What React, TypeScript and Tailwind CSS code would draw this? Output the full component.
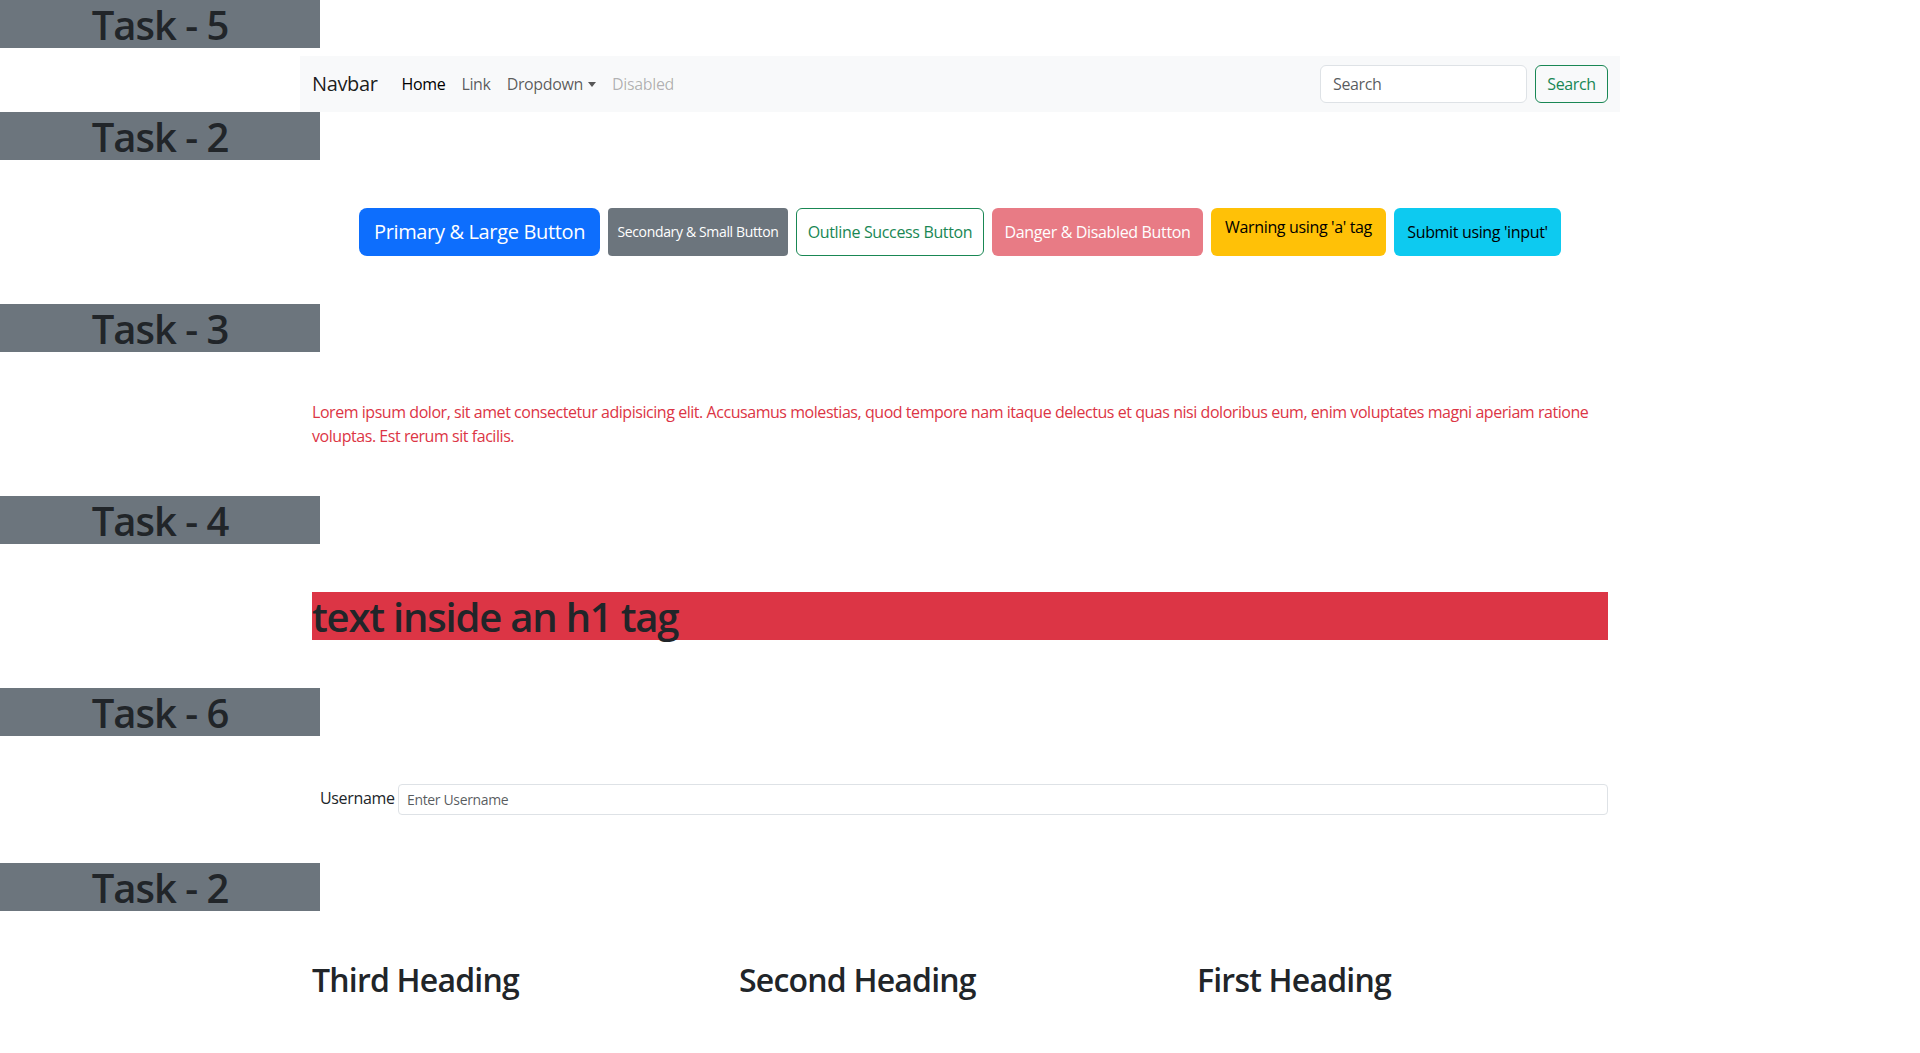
import React from 'react';

const TaskTitle: React.FC<{ title: string }> = ({ title }) => (
    <h1 className="w-[320px] h-12 bg-[#6c757d] text-center text-[40px] leading-[50px] font-semibold tracking-[-1px] text-[#212529]">
        {title}
    </h1>
);

const Navbar: React.FC = () => (
    <nav className="w-[1320px] h-14 mx-auto mt-2 bg-[#f8f9fa]">
        <div className="flex items-center justify-between h-full px-3">
            <div className="flex items-center">
                <a href="#" className="mr-4 text-[20px] leading-[30px] text-black/90">
                    Navbar
                </a>
                <ul className="flex">
                    <li>
                        <a href="#" className="block px-2 py-2 text-black">
                            Home
                        </a>
                    </li>
                    <li>
                        <a href="#" className="block px-2 py-2 text-black/65">
                            Link
                        </a>
                    </li>
                    <li>
                        <a href="#" className="flex items-center px-2 py-2 text-black/65">
                            Dropdown
                            <span className="ml-[5px] inline-block w-0 h-0 border-x-[4px] border-x-transparent border-t-[5px] border-t-black/65"></span>
                        </a>
                    </li>
                    <li>
                        <span className="block px-2 py-2 text-black/30">Disabled</span>
                    </li>
                </ul>
            </div>
            <form className="flex items-center gap-2">
                <input
                    type="search"
                    placeholder="Search"
                    className="w-[207px] h-[38px] px-3 bg-white border border-[#dee2e6] rounded-md text-base placeholder:text-[#212529]/75 outline-none"
                />
                <button
                    type="button"
                    className="w-[73px] h-[38px] border border-[#198754] rounded-md text-[#198754] text-base"
                >
                    Search
                </button>
            </form>
        </div>
    </nav>
);

const Buttons: React.FC = () => (
    <div className="flex justify-center gap-2 my-12">
        <button className="w-[241px] h-12 bg-[#0d6efd] text-white text-[20px] rounded-lg">
            Primary &amp; Large Button
        </button>
        <button className="w-[180px] bg-[#6c757d] text-white text-sm rounded">
            Secondary &amp; Small Button
        </button>
        <button className="w-[188px] border border-[#198754] text-[#198754] rounded-md">
            Outline Success Button
        </button>
        <button disabled className="w-[211px] bg-[#dc3545] text-white rounded-md opacity-65">
            Danger &amp; Disabled Button
        </button>
        <a href="#" className="block w-[175px] pt-[7px] bg-[#ffc107] text-black text-center rounded-md">
            Warning using 'a' tag
        </a>
        <input
            type="submit"
            value="Submit using 'input'"
            className="w-[167px] bg-[#0dcaf0] text-black rounded-md tracking-[-0.35px]"
        />
    </div>
);

const App: React.FC = () => {
    return (
        <div className="min-h-screen bg-white text-[#212529] text-base leading-6 tracking-[-0.35px] font-['Open_Sans','Noto_Sans',sans-serif]">
            <TaskTitle title="Task - 5" />
            <Navbar />
            <TaskTitle title="Task - 2" />
            <Buttons />
            <TaskTitle title="Task - 3" />
            <div className="w-[1320px] mx-auto px-3 my-12">
                <p className="text-[#dc3545] tracking-[-0.45px]">
                    Lorem ipsum dolor, sit amet consectetur adipisicing elit. Accusamus molestias, quod tempore nam itaque
                    delectus et quas nisi doloribus eum, enim voluptates magni aperiam ratione voluptas. Est rerum sit facilis.
                </p>
            </div>
            <TaskTitle title="Task - 4" />
            <div className="w-[1320px] mx-auto px-3 my-12">
                <h1 className="h-12 bg-[#dc3545] text-[40px] leading-[50px] font-semibold tracking-[-1.2px]">
                    text inside an h1 tag
                </h1>
            </div>
            <TaskTitle title="Task - 6" />
            <div className="w-[1320px] mx-auto px-3 my-12">
                <div className="flex items-center">
                    <label htmlFor="username" className="w-[86px] pl-2 pb-1">
                        Username
                    </label>
                    <input
                        id="username"
                        type="text"
                        placeholder="Enter Username"
                        className="flex-1 h-[31px] px-2 border border-[#dee2e6] rounded text-sm placeholder:text-[#212529]/75 outline-none"
                    />
                </div>
            </div>
            <TaskTitle title="Task - 2" />
            <div className="w-[1320px] mx-auto px-3 mt-[50px]">
                <div className="flex text-[32px] leading-[38px] font-semibold tracking-[-0.8px]">
                    <h2 className="w-[427px]">Third Heading</h2>
                    <h2 className="w-[458px]">Second Heading</h2>
                    <h2>First Heading</h2>
                </div>
            </div>
        </div>
    );
};

export default App;
